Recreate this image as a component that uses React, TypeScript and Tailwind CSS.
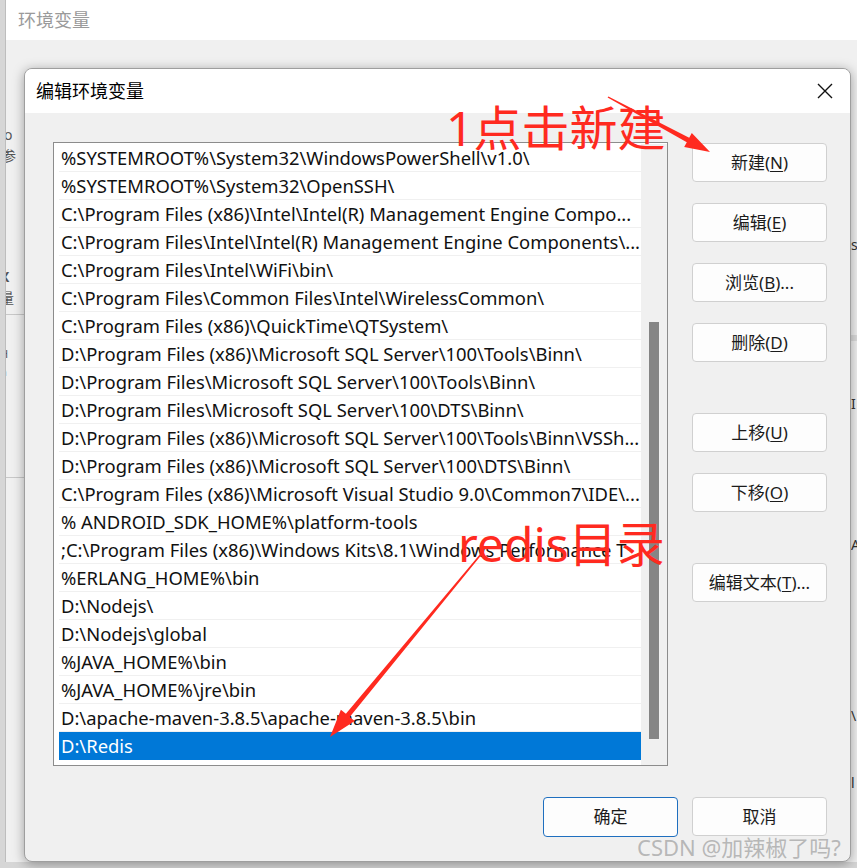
import React from "react";

const PATHS = [
  "%SYSTEMROOT%\\System32\\WindowsPowerShell\\v1.0\\",
  "%SYSTEMROOT%\\System32\\OpenSSH\\",
  "C:\\Program Files (x86)\\Intel\\Intel(R) Management Engine Compo...",
  "C:\\Program Files\\Intel\\Intel(R) Management Engine Components\\...",
  "C:\\Program Files\\Intel\\WiFi\\bin\\",
  "C:\\Program Files\\Common Files\\Intel\\WirelessCommon\\",
  "C:\\Program Files (x86)\\QuickTime\\QTSystem\\",
  "D:\\Program Files (x86)\\Microsoft SQL Server\\100\\Tools\\Binn\\",
  "D:\\Program Files\\Microsoft SQL Server\\100\\Tools\\Binn\\",
  "D:\\Program Files\\Microsoft SQL Server\\100\\DTS\\Binn\\",
  "D:\\Program Files (x86)\\Microsoft SQL Server\\100\\Tools\\Binn\\VSSh...",
  "D:\\Program Files (x86)\\Microsoft SQL Server\\100\\DTS\\Binn\\",
  "C:\\Program Files (x86)\\Microsoft Visual Studio 9.0\\Common7\\IDE\\...",
  "% ANDROID_SDK_HOME%\\platform-tools",
  ";C:\\Program Files (x86)\\Windows Kits\\8.1\\Windows Performance T",
  "%ERLANG_HOME%\\bin",
  "D:\\Nodejs\\",
  "D:\\Nodejs\\global",
  "%JAVA_HOME%\\bin",
  "%JAVA_HOME%\\jre\\bin",
  "D:\\apache-maven-3.8.5\\apache-maven-3.8.5\\bin",
  "D:\\Redis",
];

const FONT = "font-['Noto_Sans','Noto_Sans_CJK_SC',sans-serif]";

const STYLES = {
  BTN: "h-[39px] w-[135px] flex items-center justify-center rounded-[4px] border border-[#d0d0d0] bg-[#fdfdfd] text-[17px] text-[#1b1b1b]",
  ROW: "h-[28px] flex items-center pl-[2px] border-b border-[#f0f0f0] whitespace-nowrap overflow-hidden text-[18.4px]",
  ANNOT: "absolute text-[48px] leading-none text-[#ff2a1f] font-['Noto_Sans','Noto_Sans_CJK_SC',sans-serif]",
};

const SideButton = ({ label, accel, tail = "" }: { label: string; accel: string; tail?: string }) => (
  <button className={STYLES.BTN}>
    {label}(<span className="underline underline-offset-2">{accel}</span>){tail}
  </button>
);

const App = () => {
  return (
    <div className={`relative w-[857px] h-[868px] overflow-hidden bg-[#d6d6d6] ${FONT}`}>
      {/* background window */}
      <div className="ml-[5px] h-[862px] border-l border-[#bdbdbd] bg-[#f0f0f0] flex flex-col">
        <div className="h-[40px] bg-white flex items-center pl-[12px] text-[18px] text-[#9a9a9a]">环境变量</div>
        <div className="flex-1 flex">
          <div className="w-[19px] flex flex-col text-[14px] text-[#555] overflow-hidden">
            <span className="mt-[84px] -ml-[2px]">o</span>
            <span className="-ml-[4px]">参</span>
            <span className="mt-[100px] -ml-[6px] font-bold">X</span>
            <span className="-ml-[6px]">量</span>
            <div className="mt-[6px] h-px bg-[#c8c8c8]" />
            <span className="mt-[14px] -ml-[6px] text-[11px]">a</span>
            <span className="-ml-[6px] text-[11px]">H</span>
            <span className="mt-[2px] -ml-[6px] text-[11px]">n</span>
            <span className="mt-[70px] -ml-[6px] text-[11px]">c</span>
            <div className="mt-[10px] h-px bg-[#c8c8c8]" />
            <span className="mt-[10px] -ml-[6px] text-[12px]">I</span>
          </div>
          <div className="flex-1" />
          <div className="w-[6px] flex flex-col text-[14px] text-[#333] overflow-hidden">
            <span className="mt-[194px]">s</span>
            <div className="mt-[80px] h-[6px] bg-[#dcdcdc]" />
            <span className="mt-[52px]">I</span>
            <span className="mt-[120px]">A</span>
            <span className="mt-[150px]">\</span>
            <span className="mt-[46px]">l</span>
          </div>
        </div>
      </div>

      {/* dialog */}
      <div className="absolute left-[24px] top-[68px] w-[827px] h-[794px] rounded-[8px] border border-[#9e9e9e] bg-[#f0f0f0] shadow-[0_2px_12px_rgba(0,0,0,0.35)] overflow-hidden flex flex-col">
        <div className="h-[44px] bg-white flex items-center justify-between pl-[11px] pr-[17px]">
          <span className="text-[18px] text-black">编辑环境变量</span>
          <svg width="16" height="16" viewBox="0 0 16 16">
            <path d="M1 1L15 15M15 1L1 15" stroke="#111" strokeWidth="1.4" />
          </svg>
        </div>

        <div className="flex-1 flex flex-col pl-[28px] pr-[23px] pt-[29px]">
          <div className="flex gap-[24px]">
            <div className="w-[615px] h-[624px] border border-[#8c8c8c] bg-white flex pl-[5px] pt-[1px]">
              <div className="w-[582px] flex flex-col text-[#111]">
                {PATHS.map((p, i) =>
                  i === PATHS.length - 1 ? (
                    <div key={i} className={`${STYLES.ROW} bg-[#0078d7] text-white border-b-0`}>
                      {p}
                    </div>
                  ) : (
                    <div key={i} className={STYLES.ROW}>
                      {p}
                    </div>
                  )
                )}
              </div>
              <div className="flex-1 flex justify-center bg-[#f0f0f0]">
                <div className="mt-[178px] w-[10px] h-[417px] bg-[#858585]" />
              </div>
            </div>

            <div className="flex flex-col pt-[1px]">
              <SideButton label="新建" accel="N" />
              <div className="mt-[21px]"><SideButton label="编辑" accel="E" /></div>
              <div className="mt-[21px]"><SideButton label="浏览" accel="B" tail="..." /></div>
              <div className="mt-[21px]"><SideButton label="删除" accel="D" /></div>
              <div className="mt-[51px]"><SideButton label="上移" accel="U" /></div>
              <div className="mt-[21px]"><SideButton label="下移" accel="O" /></div>
              <div className="mt-[51px]"><SideButton label="编辑文本" accel="T" tail="..." /></div>
            </div>
          </div>

          <div className="mt-[31px] flex justify-end gap-[14px]">
            <button className="h-[40px] w-[135px] flex items-center justify-center rounded-[4px] border border-[#1f6fbf] bg-[#fdfdfd] text-[17px] text-[#1b1b1b]">
              确定
            </button>
            <button className={STYLES.BTN}>取消</button>
          </div>
        </div>
      </div>

      {/* watermark */}
      <div className="absolute left-[637px] top-[831px] text-[22px] text-[#a8a8a8]/80 whitespace-nowrap">
        CSDN @加辣椒了吗?
      </div>

      {/* red annotations */}
      <div className={`${STYLES.ANNOT} left-[446px] top-[104px]`}>1点击新建</div>
      <div className={`${STYLES.ANNOT} left-[458px] top-[520px]`}>redis目录</div>
      <svg className="absolute left-0 top-0" width="857" height="868" viewBox="0 0 857 868">
        <polygon
          points="607.6,97.6 686.8,142.2 684.2,147 710,152 691.8,133 689.2,137.8 608.4,96.4"
          fill="#ff2a1f"
        />
        <polygon
          points="481.4,552.5 345.9,713.8 340.9,709.7 330,737 354.7,721.1 349.7,717 482.6,553.5"
          fill="#ff2a1f"
        />
      </svg>
    </div>
  );
};

export default App;
